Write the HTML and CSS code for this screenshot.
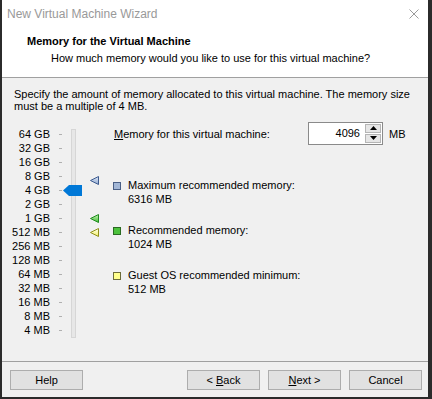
FILE: index.html
```html
<!DOCTYPE html>
<html lang="en">
<head>
    <meta charset="UTF-8">
    <meta name="viewport" content="width=device-width, initial-scale=1.0">
    <title>New Virtual Machine Wizard</title>
    <link rel="stylesheet" href="styles.css">
</head>
<body>
    <div class="window">
        <!-- Title bar -->
        <div class="titlebar">
            <span class="title">New Virtual Machine Wizard</span>
            <svg class="close" width="10" height="10" viewBox="0 0 10 10">
                <path d="M0.5 0.5 L9.5 9.5 M9.5 0.5 L0.5 9.5" stroke="#9a9a9a" stroke-width="1" fill="none"/>
            </svg>
        </div>

        <!-- Header -->
        <div class="header">
            <div class="header-title">Memory for the Virtual Machine</div>
            <div class="header-sub">How much memory would you like to use for this virtual machine?</div>
        </div>

        <!-- Content -->
        <div class="content">
            <p class="intro">Specify the amount of memory allocated to this virtual machine. The memory size must be a multiple of 4 MB.</p>

            <div class="main">
                <div class="scale">
                    <div class="labels">
                        <div class="row"><span>64 GB</span><i class="tick"></i></div>
                        <div class="row"><span>32 GB</span><i class="tick"></i></div>
                        <div class="row"><span>16 GB</span><i class="tick"></i></div>
                        <div class="row"><span>8 GB</span><i class="tick"></i></div>
                        <div class="row"><span>4 GB</span><i class="tick"></i></div>
                        <div class="row"><span>2 GB</span><i class="tick"></i></div>
                        <div class="row"><span>1 GB</span><i class="tick"></i></div>
                        <div class="row"><span>512 MB</span><i class="tick"></i></div>
                        <div class="row"><span>256 MB</span><i class="tick"></i></div>
                        <div class="row"><span>128 MB</span><i class="tick"></i></div>
                        <div class="row"><span>64 MB</span><i class="tick"></i></div>
                        <div class="row"><span>32 MB</span><i class="tick"></i></div>
                        <div class="row"><span>16 MB</span><i class="tick"></i></div>
                        <div class="row"><span>8 MB</span><i class="tick"></i></div>
                        <div class="row"><span>4 MB</span><i class="tick"></i></div>
                    </div>
                    <div class="track"></div>

                    <!-- slider thumb -->
                    <svg class="thumb" width="19" height="11" viewBox="0 0 19 11">
                        <path d="M0 5.5 L6 0 L19 0 L19 11 L6 11 Z" fill="#0078d7"/>
                    </svg>

                    <!-- recommended markers -->
                    <svg class="marker marker-max" width="9" height="9" viewBox="0 0 9 9">
                        <defs>
                            <linearGradient id="gblue" x1="0" y1="0" x2="0" y2="1">
                                <stop offset="0" stop-color="#dfe8f6"/>
                                <stop offset="1" stop-color="#8fa8d0"/>
                            </linearGradient>
                        </defs>
                        <path d="M8.5 0.5 L8.5 8.5 L0.5 4.5 Z" fill="url(#gblue)" stroke="#3d5b8f" stroke-width="1"/>
                    </svg>
                    <svg class="marker marker-rec" width="9" height="9" viewBox="0 0 9 9">
                        <defs>
                            <linearGradient id="ggreen" x1="0" y1="0" x2="0" y2="1">
                                <stop offset="0" stop-color="#c6f0b8"/>
                                <stop offset="1" stop-color="#3fbf2f"/>
                            </linearGradient>
                        </defs>
                        <path d="M8.5 0.5 L8.5 8.5 L0.5 4.5 Z" fill="url(#ggreen)" stroke="#1f8a1f" stroke-width="1"/>
                    </svg>
                    <svg class="marker marker-min" width="9" height="9" viewBox="0 0 9 9">
                        <defs>
                            <linearGradient id="gyellow" x1="0" y1="0" x2="0" y2="1">
                                <stop offset="0" stop-color="#fffff0"/>
                                <stop offset="1" stop-color="#f2f060"/>
                            </linearGradient>
                        </defs>
                        <path d="M8.5 0.5 L8.5 8.5 L0.5 4.5 Z" fill="url(#gyellow)" stroke="#8f8f1a" stroke-width="1"/>
                    </svg>
                </div>

                <div class="details">
                    <div class="memory-row">
                        <label class="memory-label"><u>M</u>emory for this virtual machine:</label>
                        <div class="spin-box">
                            <div class="spin-value">4096</div>
                            <div class="spin-buttons">
                                <div class="spin-btn">
                                    <svg width="7" height="4" viewBox="0 0 7 4"><path d="M3.5 0 L7 4 L0 4 Z" fill="#000"/></svg>
                                </div>
                                <div class="spin-btn">
                                    <svg width="7" height="4" viewBox="0 0 7 4"><path d="M0 0 L7 0 L3.5 4 Z" fill="#000"/></svg>
                                </div>
                            </div>
                        </div>
                        <span class="unit">MB</span>
                    </div>

                    <div class="legend">
                        <div class="legend-item">
                            <i class="swatch swatch-blue"></i>
                            <div>
                                <div>Maximum recommended memory:</div>
                                <div>6316 MB</div>
                            </div>
                        </div>
                        <div class="legend-item">
                            <i class="swatch swatch-green"></i>
                            <div>
                                <div>Recommended memory:</div>
                                <div>1024 MB</div>
                            </div>
                        </div>
                        <div class="legend-item">
                            <i class="swatch swatch-yellow"></i>
                            <div>
                                <div>Guest OS recommended minimum:</div>
                                <div>512 MB</div>
                            </div>
                        </div>
                    </div>
                </div>
            </div>
        </div>

        <!-- Footer buttons -->
        <div class="footer">
            <button class="btn">Help</button>
            <div class="nav">
                <button class="btn">&lt; <u>B</u>ack</button>
                <button class="btn"><u>N</u>ext &gt;</button>
                <button class="btn">Cancel</button>
            </div>
        </div>
    </div>
</body>
</html>
```

FILE: styles.css
```css
/* General Styling */
html, body {
    margin: 0;
    padding: 0;
}

body {
    font-family: "Liberation Sans", Arial, sans-serif;
    font-size: 11px;
    color: #000;
    background: #2b2b2b;
}

.window {
    width: 432px;
    height: 399px;
    box-sizing: border-box;
    border-left: 2px solid #2b2b2b;
    border-right: 4px solid #2b2b2b;
    border-bottom: 2px solid #2b2b2b;
    display: flex;
    flex-direction: column;
    background: #f0f0f0;
}

/* Title bar */
.titlebar {
    height: 27px;
    flex: none;
    background: #fff;
    display: flex;
    align-items: center;
    justify-content: space-between;
    padding: 0 9px 1px 5px;
}

.title {
    font-size: 12px;
    color: #999;
}

.close {
    display: block;
    margin-top: 1px;
}

/* Header */
.header {
    height: 50px;
    flex: none;
    box-sizing: border-box;
    background: #fff;
    border-bottom: 1px solid #a0a0a0;
    padding: 6px 0 0 25px;
}

.header-title {
    font-weight: bold;
    line-height: 14px;
}

.header-sub {
    line-height: 14px;
    margin-top: 3px;
    padding-left: 24px;
}

/* Content */
.content {
    flex: 1;
    padding: 0 12px;
}

.intro {
    margin: 0;
    padding-top: 10px;
    line-height: 12px;
}

.main {
    display: flex;
    margin-top: 9px;
}

/* Slider scale */
.scale {
    position: relative;
    width: 100px;
    margin-left: -2px;
    display: flex;
    padding-top: 6px;
}

.labels {
    display: flex;
    flex-direction: column;
}

.row {
    display: flex;
    align-items: center;
    height: 14px;
}

.row span {
    width: 38px;
    text-align: right;
    white-space: nowrap;
}

.tick {
    width: 3px;
    height: 1px;
    margin-left: 9px;
    background: #b0b0b0;
}

.track {
    width: 3px;
    height: 207px;
    margin: 2px 0 0 9px;
    background: #e7e7e7;
    border: 1px solid #d6d6d6;
}

.thumb {
    position: absolute;
    left: 51px;
    top: 64px;
}

.marker {
    position: absolute;
    left: 78px;
}

.marker-max { top: 55px; }
.marker-rec { top: 93px; }
.marker-min { top: 107px; }

/* Details column */
.details {
    flex: 1;
    padding-left: 2px;
}

.memory-row {
    display: flex;
    align-items: center;
    height: 24px;
}

.memory-label {
    width: 194px;
    padding-top: 2px;
}

.spin-box {
    display: flex;
    height: 23px;
    box-sizing: border-box;
    border: 1px solid #8a8a8a;
    background: #fff;
}

.spin-value {
    width: 51px;
    padding-right: 4px;
    text-align: right;
    line-height: 21px;
}

.spin-buttons {
    width: 16px;
    display: flex;
    flex-direction: column;
    padding: 1px;
    gap: 1px;
}

.spin-btn {
    flex: 1;
    display: flex;
    align-items: center;
    justify-content: center;
    background: #e6e6e6;
    border: 1px solid #b5b5b5;
}

.spin-btn svg {
    display: block;
}

.unit {
    margin-left: 6px;
    padding-top: 2px;
}

/* Legend */
.legend {
    display: flex;
    flex-direction: column;
    gap: 17px;
    margin-top: 33px;
}

.legend-item {
    display: flex;
    align-items: flex-start;
    line-height: 14px;
}

.swatch {
    width: 6px;
    height: 6px;
    margin: 4px 7px 0 -1px;
    border: 1px solid #555;
    flex: none;
}

.swatch-blue {
    background: #a3b7d6;
    border-color: #4a5f85;
}

.swatch-green {
    background: #4cc23c;
    border-color: #2a6a22;
}

.swatch-yellow {
    background: #ffff8c;
    border-color: #6b6b3a;
}

/* Footer */
.footer {
    flex: none;
    border-top: 1px solid #a0a0a0;
    display: flex;
    justify-content: space-between;
    padding: 8px 6px 7px 8px;
}

.nav {
    display: flex;
    gap: 8px;
}

.btn {
    width: 73px;
    height: 20px;
    padding: 0;
    font-family: "Liberation Sans", Arial, sans-serif;
    font-size: 11px;
    color: #000;
    background: #e1e1e1;
    border: 1px solid #adadad;
    border-radius: 0;
}
```
